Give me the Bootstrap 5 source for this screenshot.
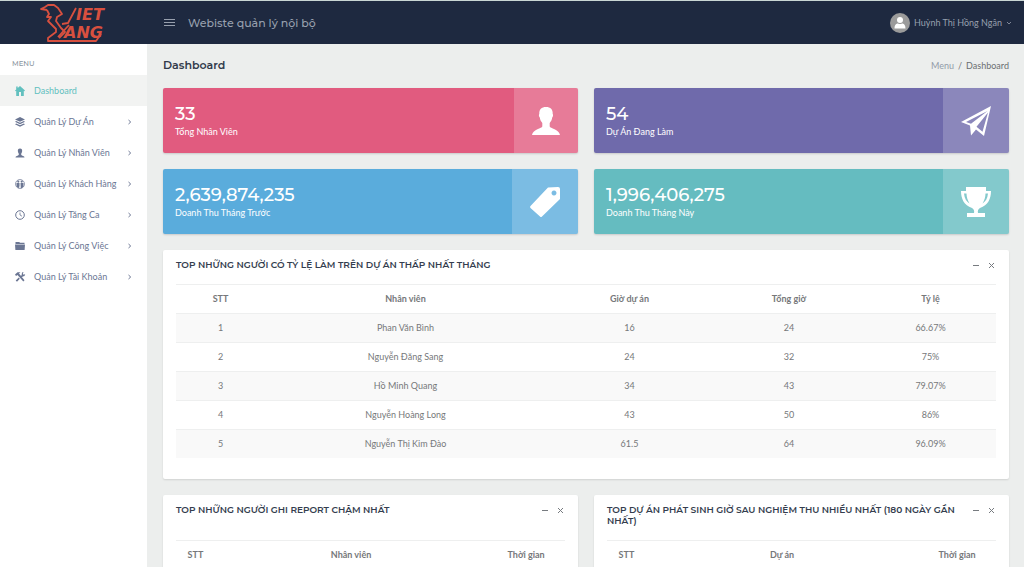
<!DOCTYPE html>
<html lang="vi">
<head>
<meta charset="utf-8">
<meta name="viewport" content="width=device-width, initial-scale=1">
<title>Dashboard</title>
<link href="https://cdn.jsdelivr.net/npm/bootstrap@5.3.0/dist/css/bootstrap.min.css" rel="stylesheet">
<style>
body { font-family: Lato, "Noto Sans", sans-serif; font-size: 9px; line-height: 14px; color: #76787a; background: #eceeed; }
.heading-font { font-family: Montserrat, Inter, "Noto Sans", sans-serif; }
.plain-btn { --bs-btn-color: currentColor; --bs-btn-font-size: 9px; --bs-btn-line-height: 1; --bs-btn-padding-x: 0; --bs-btn-padding-y: 0; --bs-btn-border-width: 0; color: inherit; }
svg { display: block; fill: currentColor; }
.topbar { background: #1e2940; height: 44px; border-top: 1px solid #c9d6d4; color: #98a0ae; }
.topbar-main { padding: 0 12px 0 16px; }
.side-col { width: 147px; flex: none; }
.site-name { font-size: 11px; font-weight: 500; }
.avatar { width: 20px; height: 20px; background: #9b9b9b; color: #fff; }
.sidebar { background: #fff; }
.menu-label { font-size: 7px; font-weight: 500; color: #8d97a2; padding: 13px 12px 4px; }
.menu-link { height: 31px; padding: 0 14px; color: #6b7693; text-decoration: none; }
.menu-link .menu-icon { width: 20px; flex: none; }
.menu-link.active { background: #f2f3f2; color: #62c0bf; }
.main-area { padding: 0 15px 16px 16px; }
.page-title { font-size: 11px; font-weight: 600; color: #313a4b; }
.page-head { height: 44px; }
.crumbs { --bs-breadcrumb-divider-color: #76787a; --bs-breadcrumb-item-padding-x: 4px; --bs-breadcrumb-item-active-color: #6b6f72; --bs-breadcrumb-font-size: 9px; }
.crumbs a { color: #929ba8; text-decoration: none; }
.tiles { gap: 16px; display: grid; grid-template-columns: 1fr 1fr; }
.tile { height: 65px; border-radius: 2px; color: #fff; overflow: hidden; box-shadow: 0 1px 2px rgba(0,0,0,.15); }
.tile-value { font-size: 18px; line-height: 22px; font-weight: 500; }
.tile-text { padding: 0 12px; }
.tile-icon { width: 66px; background: rgba(255,255,255,.2); }
.bg-rose { background: #e15b7f; } .bg-violet { background: #6f6aab; }
.bg-rose .tile-icon { width: 64px; }
.bg-sky { background: #5aacdc; } .bg-teal { background: #65bcc0; }
.panel { background: #fff; border-radius: 2px; box-shadow: 0 1px 2px rgba(0,0,0,.12); padding: 8px 13px 21px; }
.panel-head { min-height: 26px; }
.tiles .panel-head { min-height: 37px; }
.panel-title { font-size: 9px; line-height: 11px; font-weight: 600; color: #343d4e; padding-top: 1px; }
.panel-tools { padding-top: 4px; gap: 9px; color: #777b80; }
.data-table { --bs-table-color: #76787a; --bs-table-striped-color: #76787a; --bs-table-striped-bg: #f9f9f9; border-color: #eeefef; border-top: 1px solid #eeefef; table-layout: fixed; text-align: center; margin: 0; }
.data-table > :not(caption) > * > * { padding: 7px 4px; border-bottom-width: 1px; }
.data-table tbody tr:last-child > * { border-bottom-width: 0; }
.data-table thead th { font-weight: 700; }
.c-stt { width: 89px; } .c-name { width: 281px; } .c-hours { width: 167px; } .c-total { width: 152px; } .c-rate { width: 131px; }
.s-stt { width: 10%; } .s-time { width: 20%; }
</style>
</head>
<body>
<header class="topbar d-flex align-items-center">
  <a class="side-col d-flex justify-content-center" href="#" aria-label="Viet Yang">
    <svg width="70" height="42" viewBox="0 0 70 42" role="img">
      <g fill="none" stroke="#d8503f" stroke-width="1.800" stroke-linejoin="round">
        <path d="M8 8 2 7 6 5 9 3 15 3 19 6 23 12 18 15 17 19 22 26 26 30 20 36"/>
        <path d="M8 8 10 12 8 15 12 15 9 19 13 23 17 27 17 30 9 36 9 39 57 39 62 32"/>
        <path d="M23 22 29 21 37 6"/><path d="M19 35 30 23"/>
      </g>
      <g fill="#d8503f" font-family="DejaVu Sans, sans-serif" font-weight="700" font-style="italic" font-size="16">
        <text x="37" y="18">IET</text><text x="25" y="36">ANG</text>
      </g>
    </svg>
  </a>
  <div class="topbar-main d-flex flex-grow-1 align-items-center justify-content-between">
    <div class="d-flex align-items-center gap-2">
      <button class="btn plain-btn" aria-label="Menu"><svg width="13" height="9" viewBox="0 0 13 9"><path d="M1 1h11v1H1zM1 4h11v1H1zM1 7h11v1H1z"/></svg></button>
      <span class="site-name heading-font ps-1">Webiste quản lý nội bộ</span>
    </div>
    <button class="btn plain-btn d-flex align-items-center gap-1">
      <span class="avatar rounded-circle d-flex align-items-center justify-content-center"><svg width="14" height="14" viewBox="0 0 14 14"><circle cx="7" cy="4" r="3"/><path d="M1.500 12.500c0-4 2-5 3.500-5 1 .8 3 .8 4 0 1.500 0 3.500 1 3.500 5z"/></svg></span>
      <span>Huỳnh Thị Hồng Ngân</span>
      <svg width="6" height="6" viewBox="0 0 6 6"><path fill="none" stroke="currentColor" stroke-width=".8" d="M1 2l2 2 2-2"/></svg>
    </button>
  </div>
</header>
<div class="d-flex min-vh-100">
  <nav class="sidebar side-col" aria-label="Menu">
    <div class="menu-label heading-font">MENU</div>
    <a class="menu-link active d-flex align-items-center" href="#"><span class="menu-icon"><svg width="12" height="12" viewBox="0 0 12 12"><path d="M6 1 11 5.500 10.300 6.300 9.800 5.900V11H7V7H5v4H2.200V5.900l-.5.4L1 5.500 2.200 4.400V1.500h1.500V3z"/></svg></span>Dashboard</a>
    <a class="menu-link d-flex align-items-center" href="#"><span class="menu-icon"><svg width="12" height="12" viewBox="0 0 12 12"><path d="M6 1 11 3.400 6 5.800 1 3.400zM2.200 5 6 6.800 9.800 5l1.200.8L6 8.300 1 5.800zM2.200 7.500 6 9.300l3.800-1.800 1.200.8-5 2.400-5-2.400z"/></svg></span><span class="flex-grow-1">Quản Lý Dự Án</span><svg width="6" height="6" viewBox="0 0 6 6"><path d="M1.500 1 3.700 3 1.500 5" fill="none" stroke="currentColor"/></svg></a>
    <a class="menu-link d-flex align-items-center" href="#"><span class="menu-icon"><svg width="12" height="12" viewBox="0 0 24 24"><path d="M12 3c-3.500 0-4.500 2.500-4.300 5 .1 2.500 1 4 2 5.500 0 3-.5 3.500-6 5.500L3 21h18l-.7-2c-5.500-2-6-2.500-6-5.500 1-1.500 1.900-3 2-5.500.2-2.500-.8-5-4.300-5z"/></svg></span><span class="flex-grow-1">Quản Lý Nhân Viên</span><svg width="6" height="6" viewBox="0 0 6 6"><path d="M1.500 1 3.700 3 1.500 5" fill="none" stroke="currentColor"/></svg></a>
    <a class="menu-link d-flex align-items-center" href="#"><span class="menu-icon"><svg width="12" height="12" viewBox="0 0 12 12"><circle cx="6" cy="6" r="4.500" fill="none" stroke="currentColor" stroke-width=".7"/><circle cx="4.300" cy="3.600" r="1.100"/><circle cx="7.700" cy="3.600" r="1.100"/><path d="M2.500 5h3v2.500L5 10.300 2.500 8.500zM6.500 5h3v3.500L7.500 10.300H6.800z"/></svg></span><span class="flex-grow-1">Quản Lý Khách Hàng</span><svg width="6" height="6" viewBox="0 0 6 6"><path d="M1.500 1 3.700 3 1.500 5" fill="none" stroke="currentColor"/></svg></a>
    <a class="menu-link d-flex align-items-center" href="#"><span class="menu-icon"><svg width="12" height="12" viewBox="0 0 12 12"><g fill="none" stroke="currentColor"><circle cx="6" cy="6" r="4.300"/><path d="M6 3.500V6l2 1.200" stroke-width=".8"/></g></svg></span><span class="flex-grow-1">Quản Lý Tăng Ca</span><svg width="6" height="6" viewBox="0 0 6 6"><path d="M1.500 1 3.700 3 1.500 5" fill="none" stroke="currentColor"/></svg></a>
    <a class="menu-link d-flex align-items-center" href="#"><span class="menu-icon"><svg width="12" height="12" viewBox="0 0 12 12"><path d="M1.500 4V2h3.800l.7.800h4.500V4zM1 4.600h10l-.4 5.400H1.400z"/></svg></span><span class="flex-grow-1">Quản Lý Công Việc</span><svg width="6" height="6" viewBox="0 0 6 6"><path d="M1.500 1 3.700 3 1.500 5" fill="none" stroke="currentColor"/></svg></a>
    <a class="menu-link d-flex align-items-center" href="#"><span class="menu-icon"><svg width="12" height="12" viewBox="0 0 12 12"><path d="M1 3.500 3.500 1.200h3L5 2.500l5.500 6.800-1.200 1.200L3.500 4 2 5zM8 1.500 9.500 1l-.7 2 1 .7L11.200 3 10.500 5l-1.700.5-1.200 1-1-1.200 1-1zM4.800 6.500l1 1.200L3 10.700 1.700 9.500z"/></svg></span><span class="flex-grow-1">Quản Lý Tài Khoản</span><svg width="6" height="6" viewBox="0 0 6 6"><path d="M1.500 1 3.700 3 1.500 5" fill="none" stroke="currentColor"/></svg></a>
  </nav>
  <main class="main-area flex-grow-1">
    <div class="page-head d-flex align-items-center justify-content-between">
      <h1 class="page-title heading-font m-0">Dashboard</h1>
      <nav aria-label="breadcrumb"><ol class="breadcrumb crumbs m-0"><li class="breadcrumb-item"><a href="#">Menu</a></li><li class="breadcrumb-item active" aria-current="page">Dashboard</li></ol></nav>
    </div>
    <div class="tiles">
      <div class="tile bg-rose d-flex"><div class="tile-text flex-grow-1 d-flex flex-column justify-content-center"><div class="tile-value heading-font">33</div><div>Tổng Nhân Viên</div></div>
        <div class="tile-icon d-flex align-items-center justify-content-center"><svg width="30" height="30" viewBox="0 0 30 30"><path d="M15 1C10.500 1 8 3.500 8.300 8c-.8 1-.3 2.500.5 3.500.3 2.500 1.300 4 2.500 5.500v3.500C11 22.500 2 23 1 29h28c-1-6-10-6.500-10.300-8.500V17c1.200-1.500 2.200-3 2.500-5.500.8-1 1.300-2.500.5-3.500C22 3.500 19.500 1 15 1z"/></svg></div></div>
      <div class="tile bg-violet d-flex"><div class="tile-text flex-grow-1 d-flex flex-column justify-content-center"><div class="tile-value heading-font">54</div><div>Dự Án Đang Làm</div></div>
        <div class="tile-icon d-flex align-items-center justify-content-center"><svg width="32" height="32" viewBox="0 0 32 32"><path fill-rule="evenodd" d="M31 1 24 31 16 24.500 11 30.500 10 20.500 1 17zM27.500 6 6 17l5 1.700zM28 7.500 16.500 21.700 22.500 26.700z"/></svg></div></div>
      <div class="tile bg-sky d-flex"><div class="tile-text flex-grow-1 d-flex flex-column justify-content-center"><div class="tile-value heading-font">2,639,874,235</div><div>Doanh Thu Tháng Trước</div></div>
        <div class="tile-icon d-flex align-items-center justify-content-center"><svg width="32" height="32" viewBox="0 0 32 32"><path fill-rule="evenodd" d="M19 1.500 29 1q2 0 2 2v10L13 30.500q-1 1-2 0L1.500 22q-1-1 0-2zM25 4.500a2.500 2.500 0 1 0 .01 0z"/></svg></div></div>
      <div class="tile bg-teal d-flex"><div class="tile-text flex-grow-1 d-flex flex-column justify-content-center"><div class="tile-value heading-font">1,996,406,275</div><div>Doanh Thu Tháng Này</div></div>
        <div class="tile-icon d-flex align-items-center justify-content-center"><svg width="32" height="32" viewBox="0 0 32 32"><path fill-rule="evenodd" d="M6 1h20v4h5c0 8-3 14-11 17-2 1-2.500 3-2 5h7v4H7v-4h7c.500-2 0-4-2-5C4 19 1 13 1 5h5zM4 7.500c.5 5 2.500 8 5.500 10C7.500 14 6.500 11 6.500 7.500zM28 7.500h-2.500c0 3.500-1 6.500-3 10 3-2 5-5 5.500-10z"/></svg></div></div>
    </div>
    <section class="panel mt-3">
      <div class="panel-head d-flex justify-content-between"><h2 class="panel-title heading-font m-0">TOP NHỮNG NGƯỜI CÓ TỶ LỆ LÀM TRÊN DỰ ÁN THẤP NHẤT THÁNG</h2>
        <div class="panel-tools d-flex align-items-start"><button class="btn plain-btn" aria-label="Thu gọn"><svg width="7" height="7" viewBox="0 0 7 7"><path d="M0 3h6v1H0z"/></svg></button><button class="btn plain-btn" aria-label="Đóng"><svg width="7" height="7" viewBox="0 0 7 7"><path d="M0 1l5 5M5 1 0 6" stroke="currentColor"/></svg></button></div></div>
      <table class="table table-striped data-table">
        <thead><tr><th class="c-stt">STT</th><th class="c-name">Nhân viên</th><th class="c-hours">Giờ dự án</th><th class="c-total">Tổng giờ</th><th class="c-rate">Tỷ lệ</th></tr></thead>
        <tbody>
          <tr><td>1</td><td>Phan Văn Bình</td><td>16</td><td>24</td><td>66.67%</td></tr>
          <tr><td>2</td><td>Nguyễn Đăng Sang</td><td>24</td><td>32</td><td>75%</td></tr>
          <tr><td>3</td><td>Hồ Minh Quang</td><td>34</td><td>43</td><td>79.07%</td></tr>
          <tr><td>4</td><td>Nguyễn Hoàng Long</td><td>43</td><td>50</td><td>86%</td></tr>
          <tr><td>5</td><td>Nguyễn Thị Kim Đào</td><td>61.5</td><td>64</td><td>96.09%</td></tr>
        </tbody>
      </table>
    </section>
    <div class="tiles mt-3">
      <section class="panel"><div class="panel-head d-flex justify-content-between"><h2 class="panel-title heading-font m-0">TOP NHỮNG NGƯỜI GHI REPORT CHẬM NHẤT</h2>
        <div class="panel-tools d-flex align-items-start"><button class="btn plain-btn" aria-label="Thu gọn"><svg width="7" height="7" viewBox="0 0 7 7"><path d="M0 3h6v1H0z"/></svg></button><button class="btn plain-btn" aria-label="Đóng"><svg width="7" height="7" viewBox="0 0 7 7"><path d="M0 1l5 5M5 1 0 6" stroke="currentColor"/></svg></button></div></div>
        <table class="table data-table"><thead><tr><th class="s-stt">STT</th><th>Nhân viên</th><th class="s-time">Thời gian</th></tr></thead></table></section>
      <section class="panel"><div class="panel-head d-flex justify-content-between"><h2 class="panel-title heading-font m-0">TOP DỰ ÁN PHÁT SINH GIỜ SAU NGHIỆM THU NHIỀU NHẤT (180 NGÀY GẦN NHẤT)</h2>
        <div class="panel-tools d-flex align-items-start"><button class="btn plain-btn" aria-label="Thu gọn"><svg width="7" height="7" viewBox="0 0 7 7"><path d="M0 3h6v1H0z"/></svg></button><button class="btn plain-btn" aria-label="Đóng"><svg width="7" height="7" viewBox="0 0 7 7"><path d="M0 1l5 5M5 1 0 6" stroke="currentColor"/></svg></button></div></div>
        <table class="table data-table"><thead><tr><th class="s-stt">STT</th><th>Dự án</th><th class="s-time">Thời gian</th></tr></thead></table></section>
    </div>
  </main>
</div>
<script src="https://cdn.jsdelivr.net/npm/bootstrap@5.3.0/dist/js/bootstrap.bundle.min.js"></script>
</body>
</html>
